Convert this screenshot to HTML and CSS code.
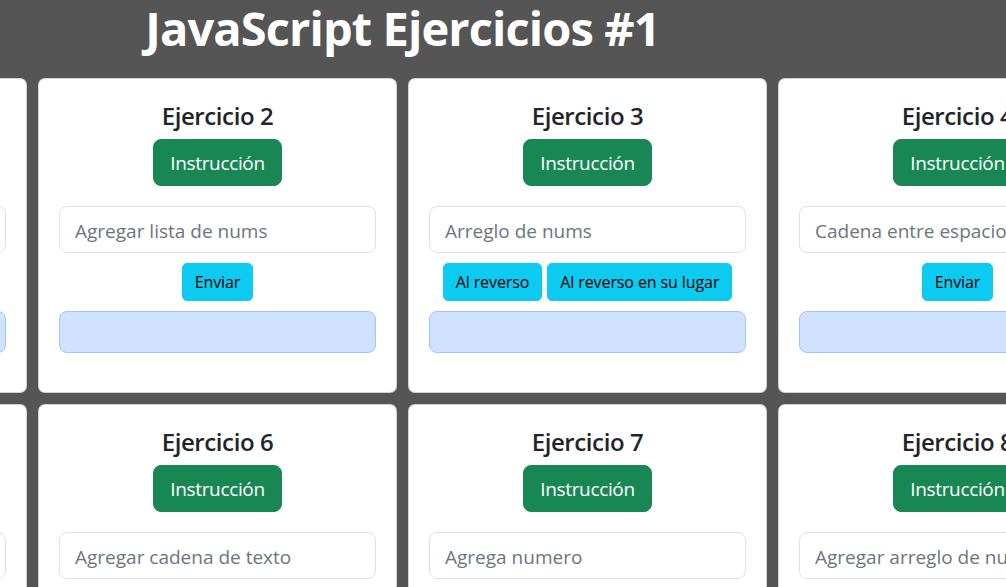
FILE: index.html
```html
<!DOCTYPE html>
<html lang="es">
<head>
<meta charset="utf-8">
<title>JavaScript Ejercicios #1</title>
<link rel="stylesheet" href="styles.css">
</head>
<body>
<div class="page">
  <h1 class="title">JavaScript Ejercicios #1</h1>
  <div class="grid">
    <div class="card">
      <h3 class="card-title">Ejercicio 1</h3>
      <button class="btn btn-success">Instrucción</button>
      <input class="form-control" type="text" placeholder="Agregar número">
      <div class="actions"><button class="btn btn-info">Enviar</button></div>
      <div class="alert"></div>
    </div>
    <div class="card">
      <h3 class="card-title">Ejercicio 2</h3>
      <button class="btn btn-success">Instrucción</button>
      <input class="form-control" type="text" placeholder="Agregar lista de nums">
      <div class="actions"><button class="btn btn-info">Enviar</button></div>
      <div class="alert"></div>
    </div>
    <div class="card">
      <h3 class="card-title">Ejercicio 3</h3>
      <button class="btn btn-success">Instrucción</button>
      <input class="form-control" type="text" placeholder="Arreglo de nums">
      <div class="actions"><button class="btn btn-info">Al reverso</button><button class="btn btn-info">Al reverso en su lugar</button></div>
      <div class="alert"></div>
    </div>
    <div class="card">
      <h3 class="card-title">Ejercicio 4</h3>
      <button class="btn btn-success">Instrucción</button>
      <input class="form-control" type="text" placeholder="Cadena entre espacios">
      <div class="actions"><button class="btn btn-info">Enviar</button></div>
      <div class="alert"></div>
    </div>
    <div class="card">
      <h3 class="card-title">Ejercicio 5</h3>
      <button class="btn btn-success">Instrucción</button>
      <input class="form-control" type="text" placeholder="Agregar texto">
      <div class="actions"><button class="btn btn-info">Enviar</button></div>
      <div class="alert"></div>
    </div>
    <div class="card">
      <h3 class="card-title">Ejercicio 6</h3>
      <button class="btn btn-success">Instrucción</button>
      <input class="form-control" type="text" placeholder="Agregar cadena de texto">
      <div class="actions"><button class="btn btn-info">Enviar</button></div>
      <div class="alert"></div>
    </div>
    <div class="card">
      <h3 class="card-title">Ejercicio 7</h3>
      <button class="btn btn-success">Instrucción</button>
      <input class="form-control" type="text" placeholder="Agrega numero">
      <div class="actions"><button class="btn btn-info">Enviar</button></div>
      <div class="alert"></div>
    </div>
    <div class="card">
      <h3 class="card-title">Ejercicio 8</h3>
      <button class="btn btn-success">Instrucción</button>
      <input class="form-control" type="text" placeholder="Agregar arreglo de nums">
      <div class="actions"><button class="btn btn-info">Enviar</button></div>
      <div class="alert"></div>
    </div>
  </div>
</div>
</body>
</html>
```

FILE: styles.css
```css
* { box-sizing: border-box; }

html, body {
  margin: 0;
  padding: 0;
  background: #555555;
  overflow: hidden;
}

body {
  font-family: "Open Sans", "Noto Sans", "Liberation Sans", sans-serif;
  color: #212529;
}

.page {
  width: 1469px;
  margin-left: -332px;
}

.title {
  margin: 0;
  padding-bottom: 22px;
  text-align: center;
  color: #ffffff;
  font-size: 47px;
  line-height: 56px;
  font-weight: 700;
  letter-spacing: -0.9px;
}

.grid {
  display: grid;
  grid-template-columns: repeat(4, 359px);
  gap: 11px;
}

.card {
  background: #ffffff;
  border: 1px solid rgba(0, 0, 0, 0.175);
  border-radius: 7px;
  padding: 22px 20px 39px;
  display: flex;
  flex-direction: column;
  align-items: center;
  text-align: center;
}

.card-title {
  margin: 0 0 9px;
  font-size: 24px;
  line-height: 29px;
  font-weight: 600;
  letter-spacing: -0.4px;
}

.btn {
  font-family: inherit;
  cursor: pointer;
  border: 1px solid transparent;
}

.btn-success {
  background: #198754;
  border-color: #198754;
  color: #ffffff;
  font-size: 19px;
  line-height: 29px;
  padding: 9px 16px 7px;
  border-radius: 8px;
  margin-bottom: 20px;
  letter-spacing: -0.35px;
}

.form-control {
  width: 100%;
  height: 47px;
  font-family: inherit;
  font-size: 19px;
  line-height: 29px;
  padding: 9px 15px 7px;
  border: 1px solid #dee2e6;
  border-radius: 8px;
  background: #ffffff;
  color: #212529;
}

.form-control::placeholder {
  color: #6c757d;
  opacity: 1;
}

.actions {
  display: flex;
  justify-content: center;
  gap: 5px;
  margin-top: 10px;
}

.btn-info {
  background: #0dcaf0;
  border-color: #0dcaf0;
  color: #000000;
  font-size: 16px;
  line-height: 24px;
  padding: 6px 12px;
  border-radius: 5px;
  letter-spacing: -0.1px;
}

.alert {
  align-self: stretch;
  height: 42px;
  margin-top: 10px;
  background: #cfe2ff;
  border: 1px solid #9ec5fe;
  border-radius: 8px;
}
```
